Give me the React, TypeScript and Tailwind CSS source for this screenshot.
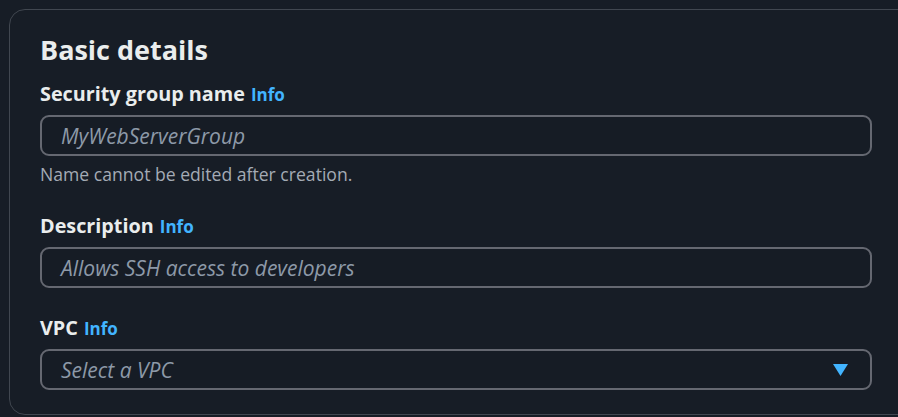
const font = { fontFamily: '"Open Sans", "Noto Sans", sans-serif' };

function Label({ text }: { text: string }) {
  return (
    <div className="flex items-baseline gap-[6px] leading-[24px]">
      <span className="text-[19.8px] font-bold text-[#eaeded]">{text}</span>
      <span className="text-[17px] font-bold text-[#42b4ff]">Info</span>
    </div>
  );
}

function Field({ placeholder, select }: { placeholder: string; select?: boolean }) {
  return (
    <div className="flex h-[41px] items-center justify-between rounded-[9px] border-2 border-[#656871] bg-[#161c25] pl-[19px] pr-[22px]">
      <span className="text-[21px] italic leading-[28px] text-[#8d99a8]">{placeholder}</span>
      {select && (
        <svg width="15" height="12" viewBox="0 0 15 12" aria-hidden="true">
          <polygon points="0,0 15,0 7.5,12" fill="#42b4ff" />
        </svg>
      )}
    </div>
  );
}

export default function App() {
  return (
    <div className="h-[417px] w-[898px] overflow-hidden bg-[#171d26] pl-[9px] pt-[9px]" style={font}>
      <div className="h-[406px] w-[920px] rounded-[16px] border border-[#414750] bg-[#171d26] pl-[30px] pr-[48px] pt-[22px]">
        <div className="w-[832px]">
          <h2 className="text-[27px] font-bold leading-[36px] text-[#eaeded]">Basic details</h2>
          <div className="mt-[14px]">
            <Label text="Security group name" />
            <div className="mt-[8px]">
              <Field placeholder="MyWebServerGroup" />
            </div>
            <p className="mt-[7px] text-[17.6px] leading-[22px] text-[#a4abb5]">
              Name cannot be edited after creation.
            </p>
          </div>
          <div className="mt-[29px]">
            <Label text="Description" />
            <div className="mt-[8px]">
              <Field placeholder="Allows SSH access to developers" />
            </div>
          </div>
          <div className="mt-[28px]">
            <Label text="VPC" />
            <div className="mt-[8px]">
              <Field placeholder="Select a VPC" select />
            </div>
          </div>
        </div>
      </div>
    </div>
  );
}
